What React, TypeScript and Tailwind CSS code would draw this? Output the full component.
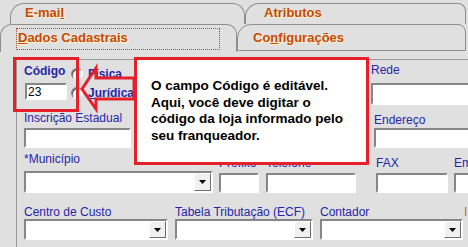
import React from "react";

const LBL = "text-[12px] leading-[14px] text-[#2626a8] whitespace-nowrap";
const TAB = "text-[13px] font-bold text-[#c64a0e] [text-shadow:1px_1px_0_#fff4b8] whitespace-nowrap";

function Edit({ className, value }: { className: string; value?: string }) {
  return (
    <div
      className={`bg-white border-2 border-[#868686] border-b-white border-r-white flex items-center pl-[1px] text-[12px] leading-none text-black ${className}`}
    >
      {value}
    </div>
  );
}

function Combo({ className }: { className: string }) {
  return (
    <div
      className={`bg-white border-2 border-[#868686] border-b-white border-r-white flex justify-end ${className}`}
    >
      <div className="w-[17px] h-full bg-[#f0f0f0] border border-white border-b-[#6e6e6e] border-r-[#6e6e6e] flex items-center justify-center">
        <svg width="7" height="4" viewBox="0 0 7 4">
          <polygon points="0,0 7,0 3.5,4" fill="#000" />
        </svg>
      </div>
    </div>
  );
}

function Radio() {
  return (
    <div className="w-[12px] h-[12px] rounded-full bg-white border border-[#808080] border-b-[#f4f4f4] border-r-[#f4f4f4] shadow-[inset_1px_1px_0_#505050]" />
  );
}

export default function App() {
  return (
    <div className="relative w-[468px] h-[247px] overflow-hidden bg-[#e0e0e0] font-['Liberation_Sans',Arial,sans-serif]">
      {/* tabs row 1 */}
      <div className="flex h-[21px] mt-[3px]">
        <div className="w-[10px] shrink-0" />
        <div className={`w-[235px] shrink-0 h-[30px] border-t border-l border-r border-[#8e8e8e] rounded-tl-[14px] rounded-tr-[12px] pl-[14px] pt-[1px] leading-[15px] ${TAB}`}>
          E-mai<span className="underline">l</span>
        </div>
        <div className={`w-[221px] shrink-0 h-[30px] border-t border-l border-r border-[#8e8e8e] rounded-tl-[14px] rounded-tr-[8px] pl-[18px] pt-[1px] leading-[15px] ${TAB}`}>
          Atributos
        </div>
      </div>
      {/* tabs row 2 */}
      <div className="relative flex h-[27px] bg-[#e0e0e0]">
        <div className="w-[237px] shrink-0 h-[28px] bg-[#e0e0e0] border-t border-l border-r border-[#8e8e8e] rounded-tl-[12px] rounded-tr-[10px] pl-[15px] pt-[3px]">
          <div className={`w-[204px] h-[22px] border border-dotted border-[#a0522d] pl-[1px] leading-[17px] ${TAB}`}>
            <span className="underline">D</span>ados Cadastrais
          </div>
        </div>
        <div className={`w-[229px] shrink-0 h-[27px] border border-[#8e8e8e] rounded-tl-[14px] rounded-tr-[8px] pl-[15px] pt-[4px] leading-[17px] ${TAB}`}>
          Co<span className="underline">n</span>figurações
        </div>
      </div>

      {/* inner panel */}
      <div className="ml-[16px] mt-[8px] h-[200px] border-l border-t border-[#9a9a9a]">
        {/* row 1 */}
        <div className="flex h-[49px]">
          <div className="ml-[7px] w-[47px] shrink-0 pt-[4px]">
            <div className={`${LBL} font-bold`}>Código</div>
            <Edit className="mt-[5px] ml-[1px] w-[42px] h-[17px]" value="23" />
          </div>
          <div className="w-[300px] shrink-0 pt-[8px]">
            <div className="flex items-center h-[12px]">
              <Radio />
              <span className={`${LBL} font-bold ml-[5px]`}>Física</span>
            </div>
            <div className="flex items-center h-[12px] mt-[7px]">
              <Radio />
              <span className={`${LBL} font-bold ml-[5px] underline`}>Jurídica</span>
            </div>
          </div>
          <div className="pt-[3px]">
            <div className={LBL}>Rede</div>
            <Edit className="mt-[6px] w-[120px] h-[22px]" />
          </div>
        </div>
        {/* row 2 */}
        <div className="flex h-[41px]">
          <div className="ml-[7px] w-[350px] shrink-0 pt-[2px]">
            <div className={LBL}>Inscrição Estadual</div>
            <Edit className="mt-[3px] w-[107px] h-[20px]" />
          </div>
          <div className="pt-[4px]">
            <div className={LBL}>Endereço</div>
            <Edit className="mt-[1px] w-[120px] h-[20px]" />
          </div>
        </div>
        {/* row 3 */}
        <div className="flex h-[51px]">
          <div className="ml-[7px] w-[189px] shrink-0 pt-[2px]">
            <div className={LBL}>*Município</div>
            <Combo className="mt-[5px] w-[189px] h-[22px]" />
          </div>
          <div className="ml-[6px] w-[40px] shrink-0 pt-[6px]">
            <div className={LBL}>Prefixo</div>
            <Edit className="mt-[3px] w-[40px] h-[20px]" />
          </div>
          <div className="ml-[7px] w-[90px] shrink-0 pt-[6px]">
            <div className={LBL}>Telefone</div>
            <Edit className="mt-[3px] w-[90px] h-[20px]" />
          </div>
          <div className="ml-[20px] w-[72px] shrink-0 pt-[6px]">
            <div className={LBL}>FAX</div>
            <Edit className="mt-[3px] w-[72px] h-[20px]" />
          </div>
          <div className="ml-[6px] w-[60px] shrink-0 pt-[6px]">
            <div className={LBL}>Email</div>
            <Edit className="mt-[3px] w-[60px] h-[20px]" />
          </div>
        </div>
        {/* row 4 */}
        <div className="flex">
          <div className="ml-[7px] w-[144px] shrink-0 pt-[4px]">
            <div className={LBL}>Centro de Custo</div>
            <Combo className="mt-0 w-[144px] h-[21px]" />
          </div>
          <div className="ml-[7px] w-[138px] shrink-0 pt-[4px]">
            <div className={LBL}>Tabela Tributação (ECF)</div>
            <Combo className="mt-0 w-[138px] h-[21px]" />
          </div>
          <div className="ml-[7px] w-[143px] shrink-0 pt-[4px]">
            <div className={LBL}>Contador</div>
            <Combo className="mt-0 w-[143px] h-[21px]" />
          </div>
          <div className="ml-[1px] pt-[4px]">
            <div className="text-[12px] leading-[14px] text-[#c06a50] whitespace-nowrap">I</div>
          </div>
        </div>
      </div>

      {/* annotation: red box around Código */}
      <div className="absolute left-[13px] top-[57px] w-[66px] h-[55px] border-[3px] border-[#e5202a]" />

      {/* annotation: arrow (outline only) */}
      <svg className="absolute left-0 top-0 pointer-events-none" width="468" height="247" viewBox="0 0 468 247">
        <polygon
          points="82,89 96,68 96,78 134,78 134,99 96,99 96,109"
          fill="none"
          stroke="#e5202a"
          strokeWidth="3"
          strokeLinejoin="miter"
        />
      </svg>

      {/* annotation: callout */}
      <div className="absolute left-[134px] top-[57px] w-[235px] h-[108px] border-[3px] border-[#e5202a] bg-white pl-[14px] pt-[18px] text-[13.5px] font-bold leading-[16.5px] text-black">
        O campo Código é editável.
        <br />
        Aqui, você deve digitar o
        <br />
        código da loja informado pelo
        <br />
        seu franqueador.
      </div>
    </div>
  );
}
